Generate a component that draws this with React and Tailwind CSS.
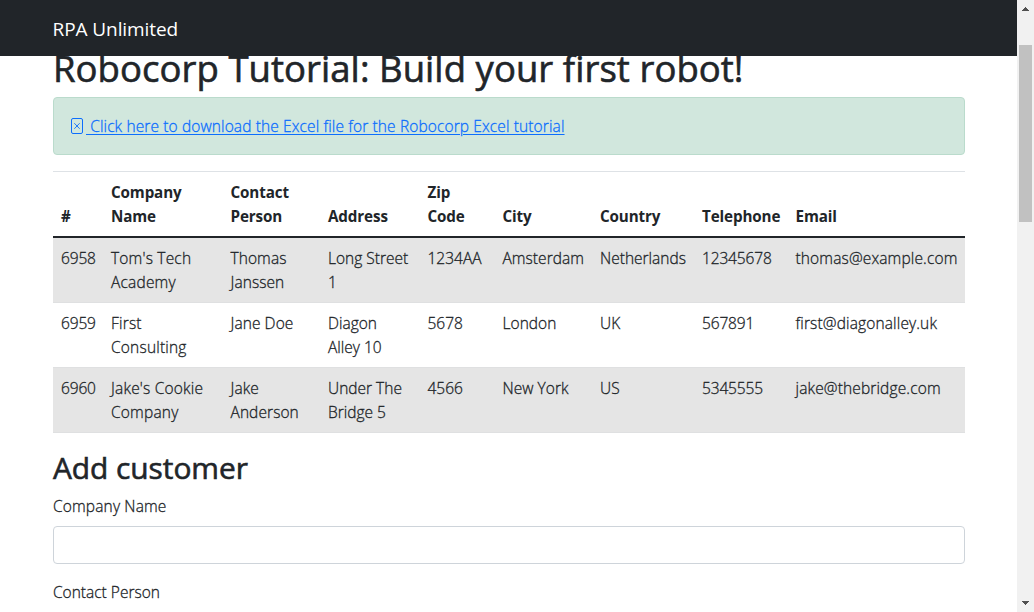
const columns = [
  { label: "#", width: "w-[50px]" },
  { label: "Company Name", width: "w-[119.5px]" },
  { label: "Contact Person", width: "w-[97.5px]" },
  { label: "Address", width: "w-[99.5px]" },
  { label: "Zip Code", width: "w-[75px]" },
  { label: "City", width: "w-[97.5px]" },
  { label: "Country", width: "w-[102px]" },
  { label: "Telephone", width: "w-[93.5px]" },
  { label: "Email", width: "w-[177.5px]" },
];

const customers = [
  ["6958", "Tom's Tech Academy", "Thomas Janssen", "Long Street 1", "1234AA", "Amsterdam", "Netherlands", "12345678", "thomas@example.com"],
  ["6959", "First Consulting", "Jane Doe", "Diagon Alley 10", "5678", "London", "UK", "567891", "first@diagonalley.uk"],
  ["6960", "Jake's Cookie Company", "Jake Anderson", "Under The Bridge 5", "4566", "New York", "US", "5345555", "jake@thebridge.com"],
];

const cellStyles = [
  "pr-1 tracking-[-0.15px]",
  "pr-4 tracking-[0.2px]",
  "pr-1 tracking-[0.08px]",
  "pr-2.5 tracking-normal",
  "pr-1 tracking-normal",
  "pr-1 tracking-[0.05px]",
  "pr-1 tracking-normal",
  "pr-1 tracking-[-0.15px]",
  "pr-1 tracking-[0.14px]",
];

function Navbar() {
  return (
    <nav className="flex h-14 shrink-0 items-center bg-[#212529] pl-[52.5px]">
      <a className="pt-0.5 text-[19px] leading-[30px] tracking-[-0.08px] text-white">RPA Unlimited</a>
    </nav>
  );
}

function DownloadAlert() {
  return (
    <div className="mt-1 flex h-[58px] items-center rounded border border-[#badbcc] bg-[#d1e7dd] pl-[17px] text-[#0d6efd]">
      <svg width="14" height="16" viewBox="0 0 14 16" fill="none" stroke="currentColor" className="shrink-0">
        <rect x="0.5" y="0.5" width="11" height="15" rx="1.5" />
        <path d="M3.3 5.2l5.4 5.6M8.7 5.2l-5.4 5.6" strokeWidth="0.9" />
      </svg>
      <a className="ml-px whitespace-pre text-[15.5px] leading-6 tracking-[0.12px] underline decoration-1 underline-offset-2"> Click here to download the Excel file for the Robocorp Excel tutorial</a>
    </div>
  );
}

function CustomerTable() {
  return (
    <table className="mt-4 w-[912px] table-fixed border-separate border-spacing-0 text-left text-[15.5px] leading-6">
      <thead>
        <tr>
          {columns.map((c) => (
            <th key={c.label} className={`${c.width} border-t border-b-2 border-t-[#dee2e6] border-b-[#212529] p-2 pr-1 align-bottom text-[15.2px] font-bold tracking-[-0.12px] [-webkit-text-stroke:0px]`}>
              {c.label}
            </th>
          ))}
        </tr>
      </thead>
      <tbody>
        {customers.map((row) => (
          <tr key={row[0]} className="odd:bg-[#e5e5e5]">
            {row.map((value, i) => (
              <td key={i} className={`h-[65px] border-b border-[#dfe0e1] py-2 pl-2 align-top ${cellStyles[i]}`}>
                {value}
              </td>
            ))}
          </tr>
        ))}
      </tbody>
    </table>
  );
}

function Scrollbar() {
  return (
    <aside className="flex w-[17px] shrink-0 flex-col items-center bg-[#f1f1f1]">
      <svg width="17" height="17" viewBox="0 0 17 17" shapeRendering="crispEdges" className="shrink-0">
        <path d="M8 7h1v1h1v1h1v1h1v1H5v-1h1V9h1V8h1z" fill="#505050" />
      </svg>
      <div className="mt-7 h-[177px] w-[13px] bg-[#c1c1c1]" />
      <div className="grow" />
      <svg width="17" height="17" viewBox="0 0 17 17" shapeRendering="crispEdges" className="shrink-0">
        <path d="M5 6h7v1h-1v1h-1v1H9v1H8V9H7V8H6V7H5z" fill="#505050" />
      </svg>
    </aside>
  );
}

export default function App() {
  return (
    <div className="flex h-[612px] w-[1034px] overflow-hidden bg-white font-['Open_Sans','Noto_Sans',sans-serif] font-light text-[#212529] [-webkit-text-stroke:0.3px]">
      <div className="flex h-full w-[1017px] flex-col">
        <div className="z-10 font-normal [-webkit-text-stroke:0px]">
          <Navbar />
        </div>
        <main className="-mt-2.5 w-[965px] pl-[53px]">
          <h1 className="h-[47px] whitespace-nowrap text-[36.5px] leading-[45px] font-normal tracking-[0.05px] [-webkit-text-stroke:0.6px]">
            Robocorp Tutorial: Build your first robot!
          </h1>
          <DownloadAlert />
          <CustomerTable />
          <h2 className="mt-4 mb-2 text-[29.9px] leading-[37px] font-normal tracking-[-0.05px] [-webkit-text-stroke:0.6px]">Add customer</h2>
          <form className="text-[15.5px] leading-6 tracking-[0.15px]">
            <label className="mb-2 block">Company Name</label>
            <input className="mb-4 block h-[38px] w-full rounded border border-[#ced4da] px-3" />
            <label className="block tracking-normal">Contact Person</label>
          </form>
        </main>
      </div>
      <Scrollbar />
    </div>
  );
}
